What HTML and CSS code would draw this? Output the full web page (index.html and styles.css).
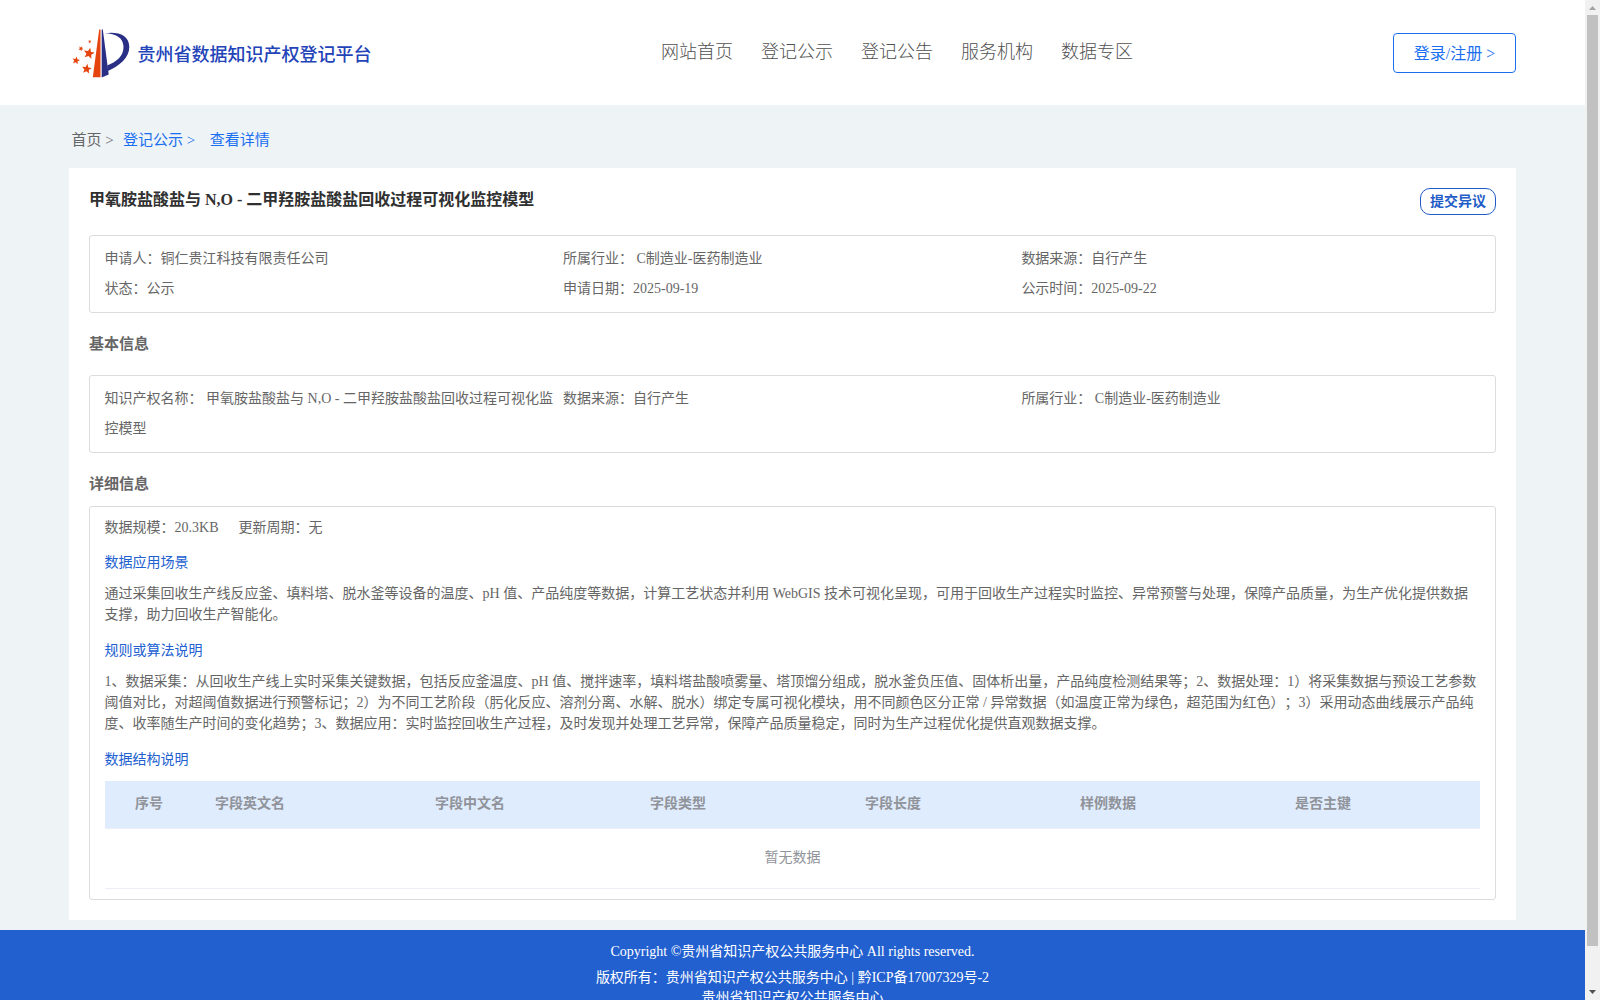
FILE: index.html
```html
<!DOCTYPE html>
<html lang="zh-CN">
<head>
<meta charset="utf-8">
<title>贵州省数据知识产权登记平台</title>
<link rel="stylesheet" href="styles.css">
</head>
<body>
<div class="page">
  <header class="header">
    <div class="brand">
      <svg class="logo" width="61" height="52" viewBox="0 0 61 52">
        <defs><path id="star" d="M0-1L.26-.35.95-.31.42.14.59.81 0 .44-.59.81-.42.14-.95-.31-.26-.35z"/></defs>
        <path fill="#e6440f" d="M29.200 2.500h1.300V50.300H22.800z"/>
        <path fill="#2a2f86" d="M31.700 2.500h1.100L38.700 47.500 31.700 50.400z"/>
        <path fill="#2a2f86" d="M34.800 6.200C48 4.200 59 8 59.300 19.500C59.500 31 49 39 37.800 44L37.200 38.500C46 35 53.800 29.500 53.500 19.500C53.200 10.500 46 6.800 34.800 6.200z"/>
        <g fill="#e6440f">
          <use href="#star" transform="translate(19 26.400) rotate(12) scale(5.800)"/>
          <use href="#star" transform="translate(16.700 42) rotate(8) scale(5.200)"/>
          <use href="#star" transform="translate(6 33.500) rotate(12) scale(4)"/>
          <use href="#star" transform="translate(11 21.600) rotate(30) scale(2.700)"/>
          <use href="#star" transform="translate(19.700 14.600) rotate(30) scale(1.800)"/>
        </g>
      </svg>
      <span class="brand-name">贵州省数据知识产权登记平台</span>
    </div>
    <nav class="nav"><a>网站首页</a><a>登记公示</a><a>登记公告</a><a>服务机构</a><a>数据专区</a></nav>
    <a class="login">登录/注册 &gt;</a>
  </header>

  <div class="crumbs"><span>首页 &gt;</span><a>登记公示 &gt;</a><a class="current">查看详情</a></div>

  <main class="card">
    <div class="title-row">
      <h1>甲氧胺盐酸盐与 N,O - 二甲羟胺盐酸盐回收过程可视化监控模型</h1>
      <a class="object">提交异议</a>
    </div>
    <div class="box facts">
      <div>申请人：铜仁贵江科技有限责任公司</div>
      <div>所属行业： C制造业-医药制造业</div>
      <div>数据来源：自行产生</div>
      <div>状态：公示</div>
      <div>申请日期：2025-09-19</div>
      <div>公示时间：2025-09-22</div>
    </div>
    <h2 class="basic">基本信息</h2>
    <div class="box facts">
      <div>知识产权名称： 甲氧胺盐酸盐与 N,O - 二甲羟胺盐酸盐回收过程可视化监<br>控模型</div>
      <div>数据来源：自行产生</div>
      <div>所属行业： C制造业-医药制造业</div>
    </div>
    <h2 class="detail-title">详细信息</h2>
    <div class="box detail">
      <div class="scale"><span>数据规模：20.3KB</span><span>更新周期：无</span></div>
      <h3>数据应用场景</h3>
      <p>通过采集回收生产线反应釜、填料塔、脱水釜等设备的温度、pH 值、产品纯度等数据，计算工艺状态并利用 WebGIS 技术可视化呈现，可用于回收生产过程实时监控、异常预警与处理，保障产品质量，为生产优化提供数据<br>支撑，助力回收生产智能化。</p>
      <h3>规则或算法说明</h3>
      <p>1、数据采集：从回收生产线上实时采集关键数据，包括反应釜温度、pH 值、搅拌速率，填料塔盐酸喷雾量、塔顶馏分组成，脱水釜负压值、固体析出量，产品纯度检测结果等；2、数据处理：1）将采集数据与预设工艺参数<br>阈值对比，对超阈值数据进行预警标记；2）为不同工艺阶段（肟化反应、溶剂分离、水解、脱水）绑定专属可视化模块，用不同颜色区分正常 / 异常数据（如温度正常为绿色，超范围为红色）；3）采用动态曲线展示产品纯<br>度、收率随生产时间的变化趋势；3、数据应用：实时监控回收生产过程，及时发现并处理工艺异常，保障产品质量稳定，同时为生产过程优化提供直观数据支撑。</p>
      <h3>数据结构说明</h3>
      <div class="table">
        <div class="thead"><span>序号</span><span>字段英文名</span><span>字段中文名</span><span>字段类型</span><span>字段长度</span><span>样例数据</span><span>是否主键</span></div>
        <div class="empty">暂无数据</div>
      </div>
    </div>
  </main>

  <footer class="footer">
    <div>Copyright ©贵州省知识产权公共服务中心 All rights reserved.</div>
    <div>版权所有：贵州省知识产权公共服务中心 | 黔ICP备17007329号-2</div>
    <div class="last">贵州省知识产权公共服务中心</div>
  </footer>
</div>
<div class="scrollbar">
  <svg width="15" height="15" viewBox="0 0 15 15"><path fill="#a3a3a3" d="M4 10h7L7.500 6z"/></svg>
  <div class="thumb"></div>
  <svg width="15" height="15" viewBox="0 0 15 15"><path fill="#505050" d="M4 5h7L7.500 9z"/></svg>
</div>
</body>
</html>
```
FILE: styles.css
```css
* { box-sizing: border-box; }
body {
  margin: 0;
  height: 1000px;
  overflow: hidden;
  display: grid;
  grid-template-columns: 1585px 15px;
  background: #eef3f6;
  color: #666;
  font: 400 14px/21px "Liberation Serif", "Noto Sans CJK SC", serif;
  text-spacing-trim: space-all;
}
h1, h2, h3, p { margin: 0; }
.page { height: 1000px; overflow: hidden; display: flex; flex-direction: column; }
.page > * { flex-shrink: 0; }

.header {
  height: 105px;
  padding: 0 69px 0 70px;
  background: #fff;
  display: grid;
  grid-template-columns: 591px 1fr auto;
  align-items: center;
}
.brand { display: flex; align-items: center; gap: 6.5px; }
.logo { display: block; }
.brand-name { font-size: 18px; line-height: 24px; font-weight: 500; color: #2343b8; margin-top: 4px; }
.nav { display: flex; gap: 28px; font-size: 18px; font-weight: 300; line-height: 24px; margin-top: -2px; color: #505050; }
.login {
  width: 123px;
  height: 40px;
  margin-top: 1px;
  border: 1px solid #1a6ff0;
  border-radius: 4px;
  color: #1a6ff0;
  font-size: 16px;
  line-height: 39px;
  text-align: center;
}

.crumbs { height: 63px; padding: 24px 0 0 71.6px; font-size: 15px; line-height: 23px; display: flex; gap: 9.3px; }
.crumbs a { color: #1a6ff0; }
.crumbs .current { margin-left: 5px; }

.card { margin: 0 69px; height: 752px; padding: 20px 20px 0; background: #fff; }
.title-row { height: 47px; display: flex; justify-content: space-between; align-items: flex-start; }
h1 { font-size: 16px; line-height: 23px; color: #303030; }
.object {
  width: 76px;
  height: 27px;
  border: 1px solid #1f5cc8;
  border-radius: 10px;
  color: #1f5cc8;
  font-weight: 700;
  line-height: 25px;
  text-align: center;
}
.box { border: 1px solid #dcdcdc; border-radius: 3px; }
.facts {
  height: 78px;
  padding: 8px 15px 8px 14.6px;
  display: grid;
  grid-template-columns: repeat(3, 458.4px);
  line-height: 30px;
  white-space: nowrap;
}
h2 { font-size: 15px; line-height: 22px; }
.basic { height: 62px; padding-top: 20px; }
.detail-title { height: 53px; padding-top: 20px; }

.detail { height: 394px; padding: 10px 15px 0 14.6px; white-space: nowrap; }
.scale { display: flex; gap: 20px; }
h3 { font-size: 14px; font-weight: 400; line-height: 21px; color: #2060d0; margin: 15px 0 10px; }
.scale + h3 { margin-top: 14px; }
.table { margin: 11px 0 0 .4px; color: #909399; }
.thead {
  height: 48px;
  padding-left: 30px;
  display: grid;
  grid-template-columns: 80px 220px 215px 215px 215px 215px auto;
  background: #dfecfe;
  border-bottom: 1px solid #ebeef5;
  font-weight: 700;
  line-height: 46px;
}
.empty { height: 60px; line-height: 58px; text-align: center; border-bottom: 1px solid #ebeef5; }

.footer { margin-top: 10px; height: 70px; padding-top: 9px; background: #2260d0; color: #fff; text-align: center; line-height: 26px; overflow: hidden; }
.footer .last { line-height: 14px; }

.scrollbar { background: #f1f1f1; display: flex; flex-direction: column; height: 1000px; }
.scrollbar svg { display: block; }
.thumb { width: 11px; height: 931px; margin: 0 2px 39px; background: #c1c1c1; }
```
